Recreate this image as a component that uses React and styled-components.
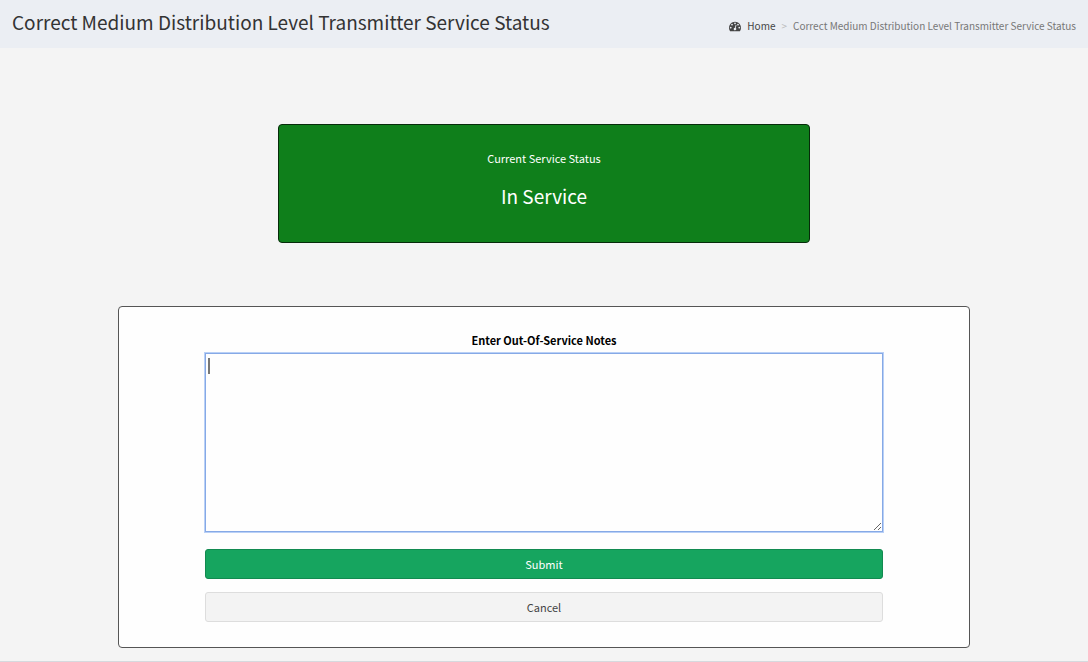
import React, { useState } from 'react';
import styled, { createGlobalStyle, css } from 'styled-components';

const GlobalStyle = createGlobalStyle`
  *, *::before, *::after { box-sizing: border-box; }

  body {
    margin: 0;
    background: #f4f4f4;
    color: #333;
    font-family: "Source Sans Pro", "Noto Sans CJK SC", "Noto Sans", sans-serif;
    font-size: 11px;
    line-height: 18px;
  }
`;

const Page = styled.div`
  display: flex;
  flex-direction: column;
  min-height: 100vh;
`;

const Header = styled.header`
  display: flex;
  justify-content: space-between;
  align-items: center;
  flex-wrap: wrap;
  min-height: 48px;
  padding: 0 12px;
  background: #ebeef3;
`;

const Title = styled.h1`
  margin: 0;
  padding-bottom: 4px;
  font-size: 19px;
  font-weight: 400;
  line-height: 24px;
`;

const Breadcrumb = styled.ol`
  display: flex;
  align-items: center;
  margin: 0;
  padding: 4px 0 0;
  list-style: none;
  font-size: 10px;
  line-height: 16px;
`;

const Crumb = styled.li`
  display: flex;
  align-items: center;
  color: #777;

  & + &::before {
    content: ">";
    padding: 0 6px;
    color: #bbb;
  }
`;

const CrumbLink = styled.a`
  display: flex;
  align-items: center;
  gap: 6px;
  color: #444;
  text-decoration: none;
  &:hover { color: #000; }
`;

const Content = styled.main`
  flex: 1;
  display: flex;
  flex-direction: column;
  align-items: center;
  gap: 63px;
  padding: 76px 12px 13px;
`;

const StatusCard = styled.section`
  width: 50%;
  padding: 24px 12px 33px;
  border: 1px solid #062b0a;
  border-radius: 4px;
  background: #0f7f1b;
  color: #fff;
  text-align: center;
`;

const StatusLabel = styled.p`
  margin: 0 0 16px;
`;

const StatusValue = styled.p`
  margin: 0;
  font-size: 19px;
  line-height: 26px;
`;

const NotesForm = styled.form`
  display: flex;
  flex-direction: column;
  width: 80%;
  padding: 24px 8% 25px;
  border: 1px solid #555;
  border-radius: 4px;
  background: #fefefe;
`;

const NotesLabel = styled.label`
  margin-bottom: 4px;
  color: #000;
  font-weight: 700;
  text-align: center;
`;

const Notes = styled.textarea`
  width: 100%;
  height: 179px;
  margin-bottom: 17px;
  padding: 2px;
  border: 1px solid #86a9e6;
  outline: none;
  background: #fefefe;
  color: #333;
  font: inherit;
  resize: vertical;

  &:focus { box-shadow: 0 0 0 1px #b9d0f6; }

  /* steady caret while nothing has been typed yet */
  ${props => props.$empty && css`
    &:focus {
      caret-color: transparent;
      background: linear-gradient(#777, #777) 2px 4px / 2px 16px no-repeat #fefefe;
    }
  `}
`;

const Button = styled.button`
  width: 100%;
  height: 30px;
  padding: 0 12px 1px;
  border: 1px solid #ddd;
  border-radius: 3px;
  background: #f3f3f3;
  color: #444;
  font: inherit;
  cursor: pointer;

  & + & { margin-top: 13px; }

  ${props => props.$primary && css`
    border-color: #128a50;
    background: #16a55f;
    color: #fff;
  `}
`;

const Footer = styled.footer`
  border-top: 1px solid #d6d9de;
`;

const DashboardIcon = () => (
  <svg width="12" height="12" viewBox="0 0 1792 1792" fill="currentColor" aria-hidden="true">
    <path d="M384 1152q0-53-37.5-90.5t-90.5-37.5-90.5 37.5-37.5 90.5 37.5 90.5 90.5 37.5 90.5-37.5 37.5-90.5zm192-448q0-53-37.5-90.5t-90.5-37.5-90.5 37.5-37.5 90.5 37.5 90.5 90.5 37.5 90.5-37.5 37.5-90.5zm428 481l101-382q6-26-7.5-48.5t-38.5-29.5-48 6.5-30 39.5l-101 382q-60 5-107 43.5t-63 98.5q-20 77 20 146t117 89 146-20 89-117q16-60-6-117t-72-91zm660-33q0-53-37.5-90.5t-90.5-37.5-90.5 37.5-37.5 90.5 37.5 90.5 90.5 37.5 90.5-37.5 37.5-90.5zm-640-640q0-53-37.5-90.5t-90.5-37.5-90.5 37.5-37.5 90.5 37.5 90.5 90.5 37.5 90.5-37.5 37.5-90.5zm448 192q0-53-37.5-90.5t-90.5-37.5-90.5 37.5-37.5 90.5 37.5 90.5 90.5 37.5 90.5-37.5 37.5-90.5zm320 448q0 261-141 483-19 29-54 29h-1402q-35 0-54-29-141-221-141-483 0-182 71-348t191-286 286-191 348-71 348 71 286 191 191 286 71 348z" />
  </svg>
);

const PAGE_TITLE = 'Correct Medium Distribution Level Transmitter Service Status';

const App = () => {
  const [notes, setNotes] = useState('');

  return (
    <Page>
      <GlobalStyle />
      <Header>
        <Title>{PAGE_TITLE}</Title>
        <nav aria-label="Breadcrumb">
          <Breadcrumb>
            <Crumb>
              <CrumbLink href="#home"><DashboardIcon /> Home</CrumbLink>
            </Crumb>
            <Crumb aria-current="page">{PAGE_TITLE}</Crumb>
          </Breadcrumb>
        </nav>
      </Header>

      <Content>
        <StatusCard>
          <StatusLabel>Current Service Status</StatusLabel>
          <StatusValue>In Service</StatusValue>
        </StatusCard>

        <NotesForm onSubmit={(e) => e.preventDefault()}>
          <NotesLabel htmlFor="notes">Enter Out-Of-Service Notes</NotesLabel>
          <Notes
            id="notes"
            value={notes}
            onChange={(e) => setNotes(e.target.value)}
            $empty={notes === ''}
            autoFocus
          />
          <Button type="submit" $primary>Submit</Button>
          <Button type="button" onClick={() => setNotes('')}>Cancel</Button>
        </NotesForm>
      </Content>

      <Footer />
    </Page>
  );
};

export default App;
